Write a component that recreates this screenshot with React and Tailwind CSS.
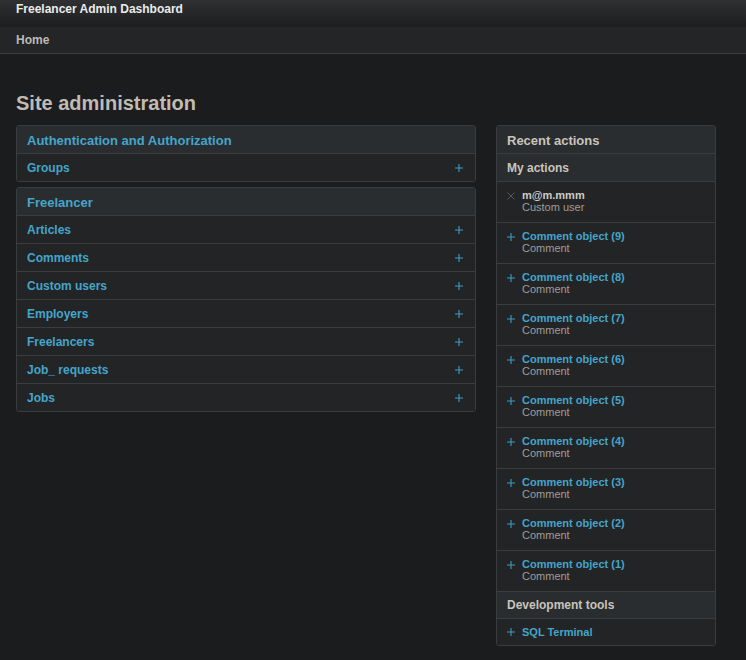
import React from "react";

const Plus = ({ className = "" }) => (
  <svg width="8" height="8" viewBox="0 0 8 8" className={className}>
    <path d="M4 0V8M0 4H8" stroke="#3c9cc4" strokeWidth="1.1" />
  </svg>
);

const Cross = () => (
  <svg width="8" height="8" viewBox="0 0 8 8">
    <path d="M0.5 0.5L7.5 7.5M7.5 0.5L0.5 7.5" stroke="#55585b" strokeWidth="1" />
  </svg>
);

const Panel = ({ title, titleBlue = true, children, className = "" }) => (
  <div className={"border border-[#3a3d40] rounded-[3px] overflow-hidden " + className}>
    <div className={"h-[27px] bg-[#2a2d30] px-[10px] pt-[2px] flex items-center text-[13px] font-bold " + (titleBlue ? "text-[#45a5ca]" : "text-[#c9c4bc]")}>
      {title}
    </div>
    {children}
  </div>
);

const ModelRow = ({ name }) => (
  <div className="h-[28px] border-t border-[#3a3d40] bg-[#222426] pl-[10px] pr-[12px] flex items-center justify-between">
    <span className="text-[12px] font-bold text-[#45a5ca]">{name}</span>
    <Plus />
  </div>
);

const SubHeader = ({ children, h = "h-[28px]" }) => (
  <div className={h + " border-t border-[#3a3d40] bg-[#2a2d30] px-[10px] flex items-center text-[12px] font-bold text-[#c9c4bc]"}>
    {children}
  </div>
);

const ActionItem = ({ title, sub, deleted }) => (
  <div className="h-[41px] border-t border-[#3a3d40] bg-[#222426] pl-[10px] flex">
    <div className="w-[15px] pt-[10px]">{deleted ? <Cross /> : <Plus />}</div>
    <div className="pt-[7px] text-[11px] leading-[12px]">
      <div className={"font-bold " + (deleted ? "text-[#cfcbc5]" : "text-[#45a5ca]")}>{title}</div>
      <div className="text-[#a19d97]">{sub}</div>
    </div>
  </div>
);

export default function App() {
  const models = ["Articles", "Comments", "Custom users", "Employers", "Freelancers", "Job_ requests", "Jobs"];
  const comments = [9, 8, 7, 6, 5, 4, 3, 2, 1];
  return (
    <div className="min-h-[660px] bg-[#1b1c1e] font-['Liberation_Sans',Arial,sans-serif]">
      <div className="h-[27px] bg-gradient-to-b from-[#2e3032] to-[#1d1e20] px-4 pt-[2px] text-[12px] leading-[14px] font-bold text-[#ebebeb]">
        Freelancer Admin Dashboard
      </div>
      <div className="h-[27px] bg-[#232527] border-b border-[#3b3d3f] px-4 flex items-center text-[12px] font-bold text-[#bdbab5]">
        Home
      </div>
      <div className="px-4 pt-[37px]">
        <h1 className="text-[20px] leading-[24px] font-bold text-[#c0bbb3] mb-[10px]">Site administration</h1>
        <div className="flex gap-[20px] items-start">
          <div className="w-[460px] flex flex-col gap-[5px]">
            <Panel title="Authentication and Authorization">
              <ModelRow name="Groups" />
            </Panel>
            <Panel title="Freelancer">
              {models.map((m) => (
                <ModelRow key={m} name={m} />
              ))}
            </Panel>
          </div>
          <Panel title="Recent actions" titleBlue={false} className="w-[220px]">
            <SubHeader>My actions</SubHeader>
            <ActionItem title="m@m.mmm" sub="Custom user" deleted />
            {comments.map((n) => (
              <ActionItem key={n} title={`Comment object (${n})`} sub="Comment" />
            ))}
            <SubHeader h="h-[27px]">Development tools</SubHeader>
            <div className="h-[27px] border-t border-[#3a3d40] bg-[#222426] pl-[10px] flex items-center">
              <div className="w-[15px] flex items-center"><Plus /></div>
              <span className="text-[11px] font-bold text-[#45a5ca]">SQL Terminal</span>
            </div>
          </Panel>
        </div>
      </div>
    </div>
  );
}
